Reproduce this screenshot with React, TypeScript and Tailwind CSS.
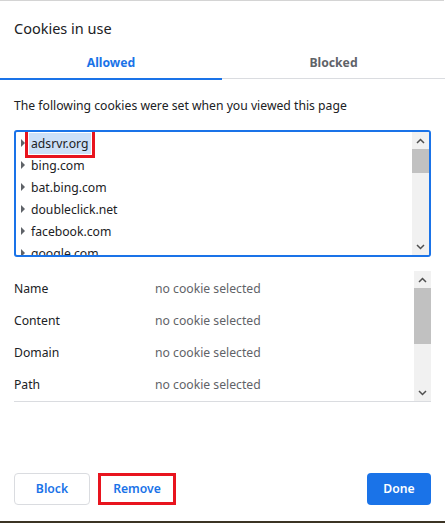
const FONT = "font-['Noto_Sans','Liberation_Sans',sans-serif]";

const sites = ["adsrvr.org", "bing.com", "bat.bing.com", "doubleclick.net", "facebook.com", "google.com"];

const details = ["Name", "Content", "Domain", "Path"];

function Arrow({ down }: { down?: boolean }) {
  return (
    <svg width="9" height="6" viewBox="0 0 9 6" className="block">
      <path
        d={down ? "M1 1 L4.5 4.5 L8 1" : "M1 5 L4.5 1.5 L8 5"}
        fill="none"
        stroke="#505050"
        strokeWidth="1.5"
      />
    </svg>
  );
}

function Scrollbar({ thumbHeight }: { thumbHeight: string }) {
  return (
    <div className="w-[17px] shrink-0 bg-[#f1f1f1] flex flex-col items-center">
      <div className="h-[17px] flex items-center justify-center">
        <Arrow />
      </div>
      <div className="flex-1 w-full">
        <div className={`w-full bg-[#c1c1c1] ${thumbHeight}`} />
      </div>
      <div className="h-[17px] flex items-center justify-center">
        <Arrow down />
      </div>
    </div>
  );
}

export default function App() {
  return (
    <div className={`w-[445px] h-[523px] bg-white flex flex-col ${FONT} text-[#202124]`}>
      <div className="h-px bg-[#d4d4d4] w-[444px]" />

      {/* Title */}
      <div className="pl-[14px] pt-[17px] text-[14.5px] leading-[20px]">Cookies in use</div>

      {/* Tabs */}
      <div className="mt-[10px] flex text-[12.2px] font-bold">
        <div className="w-[222px] h-[32px] flex flex-col">
          <div className="flex-1 flex items-center justify-center text-[#1a73e8]">Allowed</div>
          <div className="h-[2px] bg-[#1a73e8]" />
        </div>
        <div className="flex-1 h-[32px] flex flex-col">
          <div className="flex-1 flex items-center justify-center text-[#5f6368]">Blocked</div>
          <div className="h-px bg-[#dadce0]" />
          <div className="h-px" />
        </div>
      </div>

      <div className="pl-[14px] mt-[17px] text-[12.2px] leading-[18px]">
        The following cookies were set when you viewed this page
      </div>

      {/* Tree */}
      <div className="mx-[14px] mt-[15px] h-[127px] border-2 border-[#1a73e8] rounded-[3px] flex overflow-hidden">
        <div className="flex-1 pl-[5px]">
          {sites.map((s, i) => (
            <div key={s} className="h-[22px] flex items-center text-[12.2px]">
              <svg width="4" height="8" viewBox="0 0 4 8" className="mr-[4px] shrink-0">
                <path d="M0 0 L4 4 L0 8 Z" fill="#5f6368" />
              </svg>
              <span className={`relative px-[2px] leading-[21px] ${i === 0 ? "bg-[#cce0f8]" : ""}`}>
                {s}
                {i === 0 && (
                  <span className="absolute -left-[4px] -top-[7px] -right-[4px] -bottom-[4px] border-[3px] border-[#e8141e]" />
                )}
              </span>
            </div>
          ))}
        </div>
        <Scrollbar thumbHeight="h-[24px]" />
      </div>

      {/* Details */}
      <div className="mx-[14px] mt-[14px] h-[131px] flex border-b border-[#dadce0]">
        <div className="flex-1 pt-[2px]">
          {details.map((d) => (
            <div key={d} className="h-[32px] flex items-center text-[12.2px]">
              <span className="w-[141px]">{d}</span>
              <span className="text-[#5f6368]">no cookie selected</span>
            </div>
          ))}
        </div>
        <Scrollbar thumbHeight="h-[56px]" />
      </div>

      <div className="flex-1" />

      {/* Buttons */}
      <div className="px-[14px] pb-[16px] flex items-center text-[12.2px] font-semibold">
        <button className="w-[76px] h-[32px] border border-[#dadce0] rounded-[4px] text-[#1a73e8]">Block</button>
        <button className="relative ml-[8px] w-[78px] h-[32px] border border-[#dadce0] rounded-[4px] text-[#1a73e8]">
          Remove
          <span className="absolute -inset-[1px] border-[3px] border-[#e8141e]" />
        </button>
        <div className="flex-1" />
        <button className="w-[64px] h-[32px] rounded-[4px] bg-[#1a73e8] text-white">Done</button>
      </div>
      <div className="h-[2px] bg-[#3b3424]" />
    </div>
  );
}
